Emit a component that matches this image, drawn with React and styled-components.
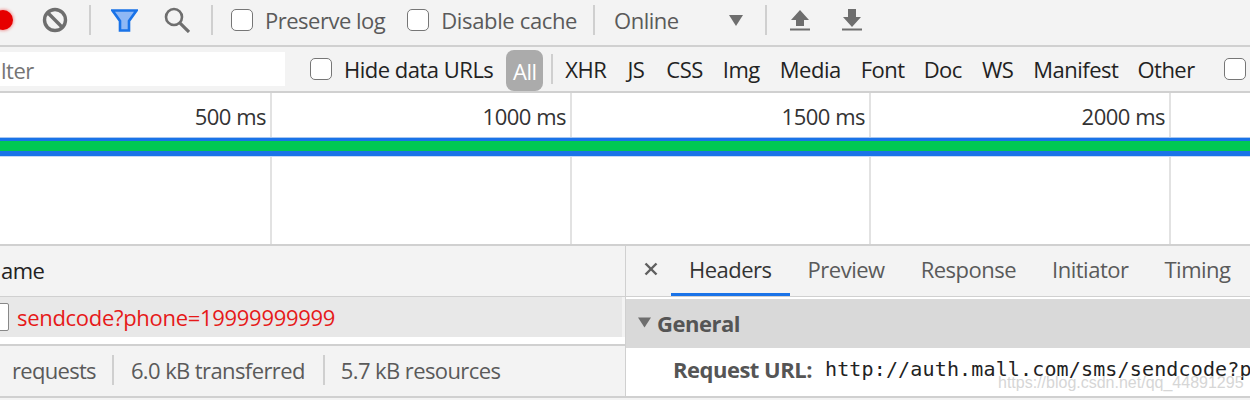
import React from "react";
import styled, { createGlobalStyle } from "styled-components";

const GlobalStyle = createGlobalStyle`
  html, body {
    margin: 0;
    padding: 0;
    background: #fff;
    overflow: hidden;
  }
  body {
    font-family: "Open Sans", "Noto Sans", sans-serif;
    font-size: 22px;
    letter-spacing: -0.5px;
  }
`;

const Page = styled.div`
  position: relative;
  width: 1250px;
  height: 400px;
  overflow: hidden;
  display: flex;
  flex-direction: column;
  background: #f3f3f3;
`;

const Toolbar = styled.div`
  display: flex;
  align-items: center;
  flex: none;
  height: ${(p) => p.$height}px;
  padding-bottom: ${(p) => p.$lift || 0}px;
  background: #f3f3f3;
  border-bottom: 2px solid #d0d0d0;
  box-sizing: border-box;
  white-space: nowrap;
`;

const RecordDot = styled.div`
  width: 20px;
  height: 20px;
  margin-left: -7px;
  border-radius: 50%;
  background: #e60000;
  box-shadow: 0 0 3px 1px #f0a0a0;
`;

const IconSlot = styled.div`
  display: flex;
  flex: none;
  margin-left: ${(p) => p.$left}px;
`;

const Divider = styled.div`
  flex: none;
  width: 2px;
  height: ${(p) => p.$height || 30}px;
  margin-left: ${(p) => p.$left}px;
  background: #cfcfcf;
`;

const Check = styled.div`
  flex: none;
  width: 20px;
  height: 20px;
  margin-left: ${(p) => p.$left}px;
  background: #fff;
  border: 1px solid #767676;
  border-radius: 5px;
`;

const Label = styled.span`
  flex: none;
  margin-left: ${(p) => p.$left}px;
  color: ${(p) => p.$color || "#5a5a5a"};
  letter-spacing: ${(p) => p.$spacing ?? -0.5}px;
  line-height: 30px;
`;

const FilterInput = styled.div`
  flex: none;
  width: 285px;
  height: 34px;
  box-sizing: border-box;
  background: #fff;
  color: #757575;
  line-height: 36px;
  overflow: hidden;
  text-indent: 1px;
`;

const AllPill = styled.div`
  flex: none;
  width: 37px;
  height: 41px;
  margin: 3px 0 0 13px;
  border-radius: 8px;
  background: #ababab;
  color: #fff;
  text-align: center;
  line-height: 42px;
`;

const Overview = styled.div`
  position: relative;
  flex: none;
  height: 151px;
  display: flex;
  background: #fff;
`;

const Tick = styled.div`
  flex: none;
  width: ${(p) => p.$width}px;
  box-sizing: border-box;
  padding: 8px 4px 0 0;
  border-right: 2px solid #e2e2e2;
  color: #333;
  text-align: right;
  line-height: 30px;
`;

const ActivityBar = styled.div`
  position: absolute;
  left: 0;
  right: 0;
  top: 45px;
  height: 10px;
  background: #00c853;
  border-top: 3px solid #1a73e8;
  border-bottom: 5px solid #1a73e8;
  box-shadow: 0 -1px 0 #a8c7f0, 0 1px 0 #c5d9f5;
`;

const Panels = styled.div`
  flex: none;
  height: 154px;
  display: flex;
  background: #f3f3f3;
  border-top: 2px solid #d0d0d0;
  border-bottom: 2px solid #d0d0d0;
  box-sizing: border-box;
`;

const LeftPanel = styled.div`
  flex: none;
  width: 625px;
  display: flex;
  flex-direction: column;
  border-right: 1px solid #d0d0d0;
`;

const NameHeader = styled.div`
  flex: none;
  height: 51px;
  box-sizing: border-box;
  padding: 9px 0 0 1px;
  color: #222;
  line-height: 30px;
  border-bottom: 1px solid #d0d0d0;
`;

const RequestRow = styled.div`
  flex: none;
  width: 622px;
  height: 40px;
  display: flex;
  align-items: center;
  background: #e8e8e8;
`;

const FileIcon = styled.div`
  flex: none;
  width: 18px;
  height: 26px;
  margin-left: -11px;
  background: #fff;
  border: 1px solid #888;
  border-radius: 2px;
`;

const RowGap = styled.div`
  flex: none;
  height: 7px;
  background: #fff;
  border-bottom: 2px solid #d0d0d0;
`;

const StatusBar = styled.div`
  flex: 1;
  display: flex;
  align-items: center;
  padding-bottom: 2px;
  white-space: nowrap;
  color: #5a5a5a;
`;

const RightPanel = styled.div`
  flex: 1;
  min-width: 0;
  display: flex;
  flex-direction: column;
  background: #fff;
`;

const TabStrip = styled.div`
  flex: none;
  height: 51px;
  box-sizing: border-box;
  display: flex;
  margin-bottom: 2px;
  background: #f3f3f3;
  border-bottom: 1px solid #d0d0d0;
  white-space: nowrap;
`;

const CloseSlot = styled.div`
  flex: none;
  width: 45px;
  box-sizing: border-box;
  padding: 0 0 4px 4px;
  display: flex;
  align-items: center;
  justify-content: center;
`;

const Tab = styled.div`
  flex: none;
  height: 50px;
  box-sizing: border-box;
  padding: 8px 18px 0;
  color: ${(p) => (p.$active ? "#333" : "#5a5a5a")};
  line-height: 30px;
  border-bottom: 3px solid ${(p) => (p.$active ? "#1a73e8" : "transparent")};
`;

const SectionHeader = styled.div`
  flex: none;
  height: 49px;
  box-sizing: border-box;
  padding-bottom: 2px;
  display: flex;
  align-items: center;
  background: #d9d9d9;
  color: #555;
  font-weight: 700;
`;

const HeaderRow = styled.div`
  display: flex;
  align-items: center;
  height: 42px;
  padding-left: 47px;
  white-space: nowrap;
  color: #555;
  font-weight: 700;
`;

const MonoValue = styled.span`
  margin-left: 13px;
  color: #222;
  font-family: "DejaVu Sans Mono", monospace;
  font-size: 20px;
  font-weight: 400;
  letter-spacing: 0.15px;
`;

const Watermark = styled.div`
  position: absolute;
  left: 998px;
  top: 373px;
  color: #d6d6d6;
  font-family: "Liberation Sans", sans-serif;
  font-size: 16px;
  letter-spacing: 0;
  line-height: 20px;
  white-space: nowrap;
`;

const StopIcon = () => (
  <svg width="26" height="26" viewBox="0 0 26 26" fill="none" stroke="#6e6e6e" strokeWidth="3.4">
    <circle cx="13" cy="13" r="10.5" />
    <line x1="5.8" y1="5.8" x2="20.2" y2="20.2" />
  </svg>
);

const FilterIcon = () => (
  <svg width="27" height="23" viewBox="0 0 27 23">
    <path d="M1.5 1.5h24L18 12v9.5H9V12z" fill="#8fb8f5" stroke="#1a73e8" strokeWidth="2.6" strokeLinejoin="miter" />
  </svg>
);

const SearchIcon = () => (
  <svg width="26" height="26" viewBox="0 0 26 26" fill="none" stroke="#6e6e6e">
    <circle cx="10" cy="10" r="8" strokeWidth="2.6" />
    <line x1="15.8" y1="15.8" x2="25" y2="25" strokeWidth="3.2" />
  </svg>
);

const UploadIcon = () => (
  <svg width="20" height="22" viewBox="0 0 20 22" fill="#6e6e6e">
    <path d="M10 1l9 10h-5v6H6v-6H1z" />
    <rect x="0" y="19.5" width="20" height="2" />
  </svg>
);

const DownloadIcon = () => (
  <svg width="20" height="22" viewBox="0 0 20 22" fill="#6e6e6e">
    <path d="M6 0h8v8h5l-9 10L1 8h5z" />
    <rect x="0" y="19.5" width="20" height="2" />
  </svg>
);

const Triangle = ({ width, height, color, left }) => (
  <IconSlot $left={left}>
    <svg width={width} height={height} viewBox="0 0 14 11">
      <path d="M0 0h14L7 11z" fill={color} />
    </svg>
  </IconSlot>
);

const CloseIcon = () => (
  <svg width="14" height="14" viewBox="0 0 14 14" stroke="#5f5f5f" strokeWidth="2.4">
    <line x1="1.5" y1="1.5" x2="12.5" y2="12.5" />
    <line x1="12.5" y1="1.5" x2="1.5" y2="12.5" />
  </svg>
);

const filters = [
  ["XHR", 12],
  ["JS", 21],
  ["CSS", 22],
  ["Img", 20],
  ["Media", 20],
  ["Font", 20],
  ["Doc", 19],
  ["WS", 20],
  ["Manifest", 20],
  ["Other", 19],
];

const App = () => (
  <Page>
    <GlobalStyle />
    <Toolbar $height={47} $lift={5}>
      <RecordDot />
      <IconSlot $left={29}><StopIcon /></IconSlot>
      <Divider $left={21} />
      <IconSlot $left={20}><FilterIcon /></IconSlot>
      <IconSlot $left={26}><SearchIcon /></IconSlot>
      <Divider $left={21} />
      <Check $left={18} />
      <Label $left={12}>Preserve log</Label>
      <Check $left={22} />
      <Label $left={12} $spacing={-0.35}>Disable cache</Label>
      <Divider $left={16} />
      <Label $left={19}>Online</Label>
      <Triangle left={50} width={14} height={11} color="#6e6e6e" />
      <Divider $left={22} />
      <IconSlot $left={23}><UploadIcon /></IconSlot>
      <IconSlot $left={32}><DownloadIcon /></IconSlot>
    </Toolbar>
    <Toolbar $height={46}>
      <FilterInput>lter</FilterInput>
      <Check $left={25} />
      <Label $left={12} $color="#222">Hide data URLs</Label>
      <AllPill>All</AllPill>
      <Divider $left={8} />
      {filters.map(([name, left]) => (
        <Label key={name} $left={left} $color="#222">{name}</Label>
      ))}
      <Check $left={29} />
    </Toolbar>
    <Overview>
      <Tick $width={272}>500 ms</Tick>
      <Tick $width={300}>1000 ms</Tick>
      <Tick $width={299}>1500 ms</Tick>
      <Tick $width={300}>2000 ms</Tick>
      <ActivityBar />
    </Overview>
    <Panels>
      <LeftPanel>
        <NameHeader>ame</NameHeader>
        <RequestRow>
          <FileIcon />
          <Label $left={8} $color="#e61919" $spacing={-0.3}>sendcode?phone=19999999999</Label>
        </RequestRow>
        <RowGap />
        <StatusBar>
          <Label $left={12} $spacing={-0.7}>requests</Label>
          <Divider $left={16} />
          <Label $left={17} $spacing={-0.6}>6.0 kB transferred</Label>
          <Divider $left={18} />
          <Label $left={16} $spacing={-0.6}>5.7 kB resources</Label>
        </StatusBar>
      </LeftPanel>
      <RightPanel>
        <TabStrip>
          <CloseSlot><CloseIcon /></CloseSlot>
          <Tab $active>Headers</Tab>
          <Tab>Preview</Tab>
          <Tab>Response</Tab>
          <Tab>Initiator</Tab>
          <Tab>Timing</Tab>
        </TabStrip>
        <SectionHeader>
          <Triangle left={12} width={13} height={11} color="#6e6e6e" />
          <Label $left={6} $color="#555">General</Label>
        </SectionHeader>
        <HeaderRow>
          Request URL:
          <MonoValue>http://auth.mall.com/sms/sendcode?phone=19999999999</MonoValue>
        </HeaderRow>
      </RightPanel>
    </Panels>
    <Watermark>https://blog.csdn.net/qq_44891295</Watermark>
  </Page>
);

export default App;
